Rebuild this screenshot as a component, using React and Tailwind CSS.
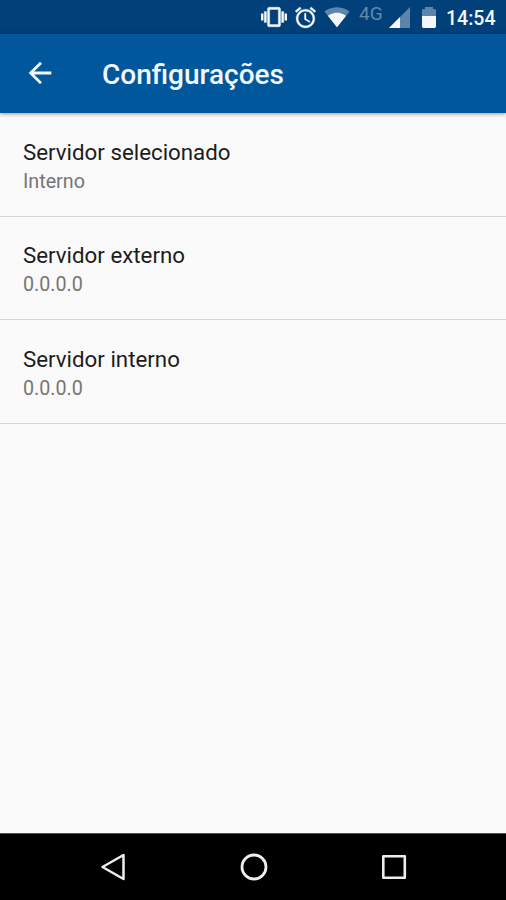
import React from 'react';

const settings = [
  { title: 'Servidor selecionado', summary: 'Interno' },
  { title: 'Servidor externo', summary: '0.0.0.0' },
  { title: 'Servidor interno', summary: '0.0.0.0' },
];

const VibrateIcon = () => (
  <svg viewBox="0 0 24 24" className="h-[26px] w-[26px] shrink-0" fill="currentColor" stroke="currentColor" strokeWidth=".4">
    <path d="M0 15h2V9H0v6zm3 2h2V7H3v10zm19-8v6h2V9h-2zm-3 8h2V7h-2v10zM16.5 3h-9C6.67 3 6 3.67 6 4.5v15c0 .83.67 1.5 1.5 1.5h9c.83 0 1.5-.67 1.5-1.5v-15c0-.83-.67-1.5-1.5-1.5zM16 19H8V5h8v14z" />
  </svg>
);

const AlarmIcon = () => (
  <svg viewBox="0 0 24 24" className="ml-[6px] h-[25px] w-[25px] shrink-0" fill="currentColor" stroke="currentColor" strokeWidth=".3">
    <path d="M22 5.72l-4.6-3.86-1.29 1.53 4.6 3.86L22 5.72zM7.88 3.39L6.6 1.86 2 5.71l1.29 1.53 4.59-3.85zM12.5 8H11v6l4.75 2.85.75-1.23-4-2.37V8zM12 4c-4.97 0-9 4.03-9 9s4.02 9 9 9c4.97 0 9-4.03 9-9s-4.03-9-9-9zm0 16c-3.87 0-7-3.13-7-7s3.13-7 7-7 7 3.13 7 7-3.13 7-7 7z" />
  </svg>
);

const WifiIcon = () => (
  <svg viewBox="0 0 24 24" className="ml-[6px] h-[26px] w-[26px] shrink-0" fill="currentColor">
    <path fillOpacity=".38" d="M12.01 21.49L23.64 7c-.45-.34-4.93-4-11.64-4C5.28 3 .81 6.66.36 7l11.63 14.49.01.01.01-.01z" />
    <path d="M3.53 10.95l8.46 10.54.01.01.01-.01 8.46-10.54C20.04 10.62 16.81 8 12 8c-4.81 0-8.04 2.62-8.47 2.95z" />
  </svg>
);

const SignalIcon = () => (
  <svg viewBox="0 0 21 21" className="mt-px ml-[5px] h-[21px] w-[21px] shrink-0" fill="currentColor">
    <path fillOpacity=".38" d="M0 21h21V0z" />
    <path d="M0 21h11V10z" />
  </svg>
);

const BatteryIcon = () => (
  <svg viewBox="0 0 14 21" className="mt-px ml-[12px] h-[21px] w-[14px] shrink-0" fill="currentColor">
    <path fillOpacity=".38" d="M0 9V3.5C0 2.700.600 2.100 1.400 2.100H3V0h8v2.100h1.600c.8 0 1.400.6 1.400 1.400V9z" />
    <path d="M0 9h14v10.6c0 .8-.6 1.4-1.4 1.4H1.4C.6 21 0 20.4 0 19.6z" />
  </svg>
);

const StatusBar = () => (
  <div className="flex h-[34px] items-center bg-[#014078] pl-[261px] text-[#f4f7fc]">
    <VibrateIcon />
    <AlarmIcon />
    <WifiIcon />
    <span className="mb-[7px] ml-[9px] w-[25px] text-[19px] leading-none text-[#5f8ab0]">4G</span>
    <SignalIcon />
    <BatteryIcon />
    <span className="mt-[4px] ml-[10px] text-[19.5px] leading-none font-medium">14:54</span>
  </div>
);

const Toolbar = () => (
  <header className="relative flex h-[78.5px] items-center bg-[#01579b] pl-[23px] text-[#f4f7fc] shadow-[0_1px_4px_rgba(0,0,0,0.4)]">
    <svg viewBox="0 0 24 24" className="h-[34px] w-[34px]" fill="currentColor">
      <path d="M20 11H7.83l5.59-5.59L12 4l-8 8 8 8 1.41-1.41L7.83 13H20v-2z" />
    </svg>
    <h1 className="mt-[4px] ml-[45px] text-[28px] leading-none font-medium">Configurações</h1>
  </header>
);

const SettingRow = ({ title, summary }) => (
  <li className="h-[103.6px] border-b border-[#d6d6d6] pt-[24.5px] pl-[23px]">
    <p className="text-[22.3px] leading-[28px] text-[#1c1c1c]">{title}</p>
    <p className="text-[19.7px] leading-[31px] text-[#757575]">{summary}</p>
  </li>
);

const NavigationBar = () => (
  <nav className="flex h-[67px] items-center border-t border-[#555555] bg-black pl-[100px] text-[#eeeeee]">
    <svg viewBox="0 0 28 30" className="h-[30px] w-[28px]" fill="none" stroke="currentColor" strokeWidth="2.5" strokeLinejoin="round">
      <path d="M23.5 3v24L2.5 15z" />
    </svg>
    <svg viewBox="0 0 30 30" className="ml-[110.5px] h-[30px] w-[30px]" fill="none" stroke="currentColor" strokeWidth="2.8">
      <circle cx="15" cy="15" r="12" />
    </svg>
    <svg viewBox="0 0 30 30" className="ml-[110.5px] h-[30px] w-[30px]" fill="none" stroke="currentColor" strokeWidth="2.6" strokeLinejoin="round">
      <path d="M4.3 4.3h21.5v21.5H4.3z" />
    </svg>
  </nav>
);

const App = () => (
  <div className="flex h-[900px] w-[506px] flex-col overflow-hidden bg-[#fafafa] font-[Roboto,sans-serif]">
    <StatusBar />
    <Toolbar />
    <ul className="flex-1 pt-[0.6px]">
      {settings.map((item) => (
        <SettingRow key={item.title} title={item.title} summary={item.summary} />
      ))}
    </ul>
    <NavigationBar />
  </div>
);

export default App;
